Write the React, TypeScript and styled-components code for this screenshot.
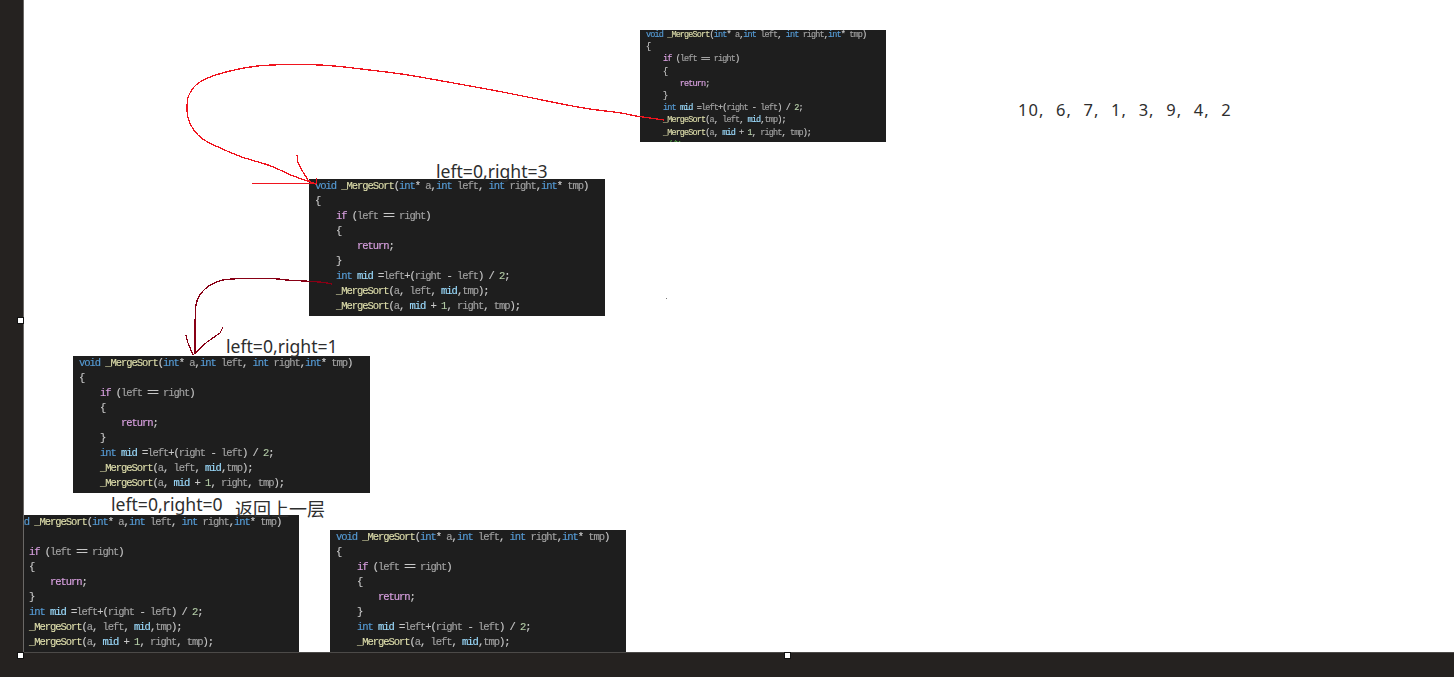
import styled, { createGlobalStyle } from "styled-components";

const GlobalStyle = createGlobalStyle`
  html, body { margin: 0; padding: 0; background: #fff; }
  #root { width: 1454px; height: 677px; overflow: hidden; }
`;

const Page = styled.div`
  position: relative;
  width: 1454px;
  height: 677px;
  display: grid;
  grid-template-columns: 24px 1fr;
  grid-template-rows: 652px 25px;
  background: #252220;
`;

const LeftRail = styled.div`
  background: #252220;
  border-right: 1px solid #6a6866;
  box-sizing: border-box;
`;

const BottomBar = styled.div`
  grid-column: 2;
  background: #252220;
  border-top: 1px solid #4c4a48;
  box-sizing: border-box;
`;

const Canvas = styled.div`
  position: relative;
  overflow: hidden;
  background: #fff;
`;

const Code = styled.div<{
  $x: number;
  $y: number;
  $w: number;
  $h: number;
  $size: number;
  $pitch: number;
  $track: number;
}>`
  position: absolute;
  left: ${(p) => p.$x}px;
  top: ${(p) => p.$y}px;
  width: ${(p) => p.$w}px;
  height: ${(p) => p.$h}px;
  overflow: hidden;
  background: #1e1e1e;
  color: #c8c8c8;
  font-family: "Liberation Mono", monospace;
  font-size: ${(p) => p.$size}px;
  line-height: ${(p) => p.$pitch}px;
  letter-spacing: ${(p) => p.$track}px;
`;

const CodeLines = styled.pre<{ $left: number; $top: number }>`
  margin: ${(p) => p.$top}px 0 0 ${(p) => p.$left}px;
  font: inherit;
  letter-spacing: inherit;
  white-space: pre;
  -webkit-text-stroke: 0.15px currentColor;
  filter: blur(0.35px);
`;

const Type = styled.span`color: #569cd6;`;
const Flow = styled.span`color: #d8a0df;`;
const Func = styled.span`color: #dcdcaa;`;
const Local = styled.span`color: #9cdcfe;`;
const Param = styled.span`color: #a0a0a0;`;
const Note = styled.span`color: #57a64a;`;
const Num = styled.span`color: #b5cea8;`;

const Label = styled.div<{ $x: number; $y: number }>`
  position: absolute;
  left: ${(p) => p.$x}px;
  top: ${(p) => p.$y}px;
  color: #2e2e2e;
  font-family: "Noto Sans", "Noto Sans CJK SC", sans-serif;
  font-size: 17.6px;
  line-height: 20px;
  white-space: nowrap;
`;

const CjkLabel = styled(Label)`
  font-family: "Noto Sans CJK SC", sans-serif;
  font-size: 18px;
`;

const Sequence = styled(Label)`
  font-size: 16.5px;
  letter-spacing: 1px;
  word-spacing: 6.4px;
`;

const Arrows = styled.svg`
  position: absolute;
  left: 0;
  top: 0;
`;

const Handle = styled.div<{ $x: number; $y: number }>`
  position: absolute;
  left: ${(p) => p.$x}px;
  top: ${(p) => p.$y}px;
  width: 5px;
  height: 5px;
  background: #fff;
  border: 1px solid #111;
`;

type Point = [number, number];

// hand-drawn stroke: smooth through the midpoints of the traced points
function smooth(points: Point[]) {
  let d = `M${points[0][0]} ${points[0][1]}`;
  for (let i = 1; i < points.length - 1; i++) {
    const [x, y] = points[i];
    const [nx, ny] = points[i + 1];
    d += ` Q${x} ${y} ${(x + nx) / 2} ${(y + ny) / 2}`;
  }
  const last = points[points.length - 1];
  return `${d} L${last[0]} ${last[1]}`;
}

const bigLoop: Point[] = [
  [664, 120], [650, 118], [635, 116], [620, 112.5], [587, 109], [537, 99], [503, 92], [470, 86], [437, 80],
  [403, 74], [370, 70], [323, 64.5], [280, 64.5], [253, 66], [220, 73], [198, 82], [190, 92], [187, 100],
  [187, 117], [193, 130], [203, 140], [220, 148], [243, 158], [270, 165], [290, 175], [310, 182], [316, 184],
];

const shortCurve: Point[] = [
  [332, 284], [325, 282], [283, 280], [277, 278.5], [227, 278.5], [213, 283], [203, 290], [196, 301], [195, 318], [195, 354],
];

function Snippet(box: {
  $x: number;
  $y: number;
  $w: number;
  $h: number;
  $size: number;
  $pitch: number;
  $track: number;
  left: number;
  top: number;
}) {
  const { left, top, ...code } = box;
  return (
    <Code {...code}>
      <CodeLines $left={left} $top={top}>
        <Type>void</Type> <Func>_MergeSort</Func>(<Type>int</Type>* <Param>a</Param>,<Type>int</Type> <Param>left</Param>, <Type>int</Type> <Param>right</Param>,<Type>int</Type>* <Param>tmp</Param>){"\n"}
        {"{\n"}
        {"    "}<Flow>if</Flow> (<Param>left</Param> == <Param>right</Param>){"\n"}
        {"    {\n"}
        {"        "}<Flow>return</Flow>;{"\n"}
        {"    }\n"}
        {"    "}<Type>int</Type> <Local>mid</Local> =<Param>left</Param>+(<Param>right</Param> - <Param>left</Param>) / <Num>2</Num>;{"\n"}
        {"    "}<Func>_MergeSort</Func>(<Param>a</Param>, <Param>left</Param>, <Local>mid</Local>,<Param>tmp</Param>);{"\n"}
        {"    "}<Func>_MergeSort</Func>(<Param>a</Param>, <Local>mid</Local> + <Num>1</Num>, <Param>right</Param>, <Param>tmp</Param>);{"\n"}
        {"     "}<Note>//Merge</Note>
      </CodeLines>
    </Code>
  );
}

const large = { $size: 10.5, $pitch: 15, $track: -1.05 };

export default function App() {
  return (
    <>
      <GlobalStyle />
      <Page>
        <LeftRail />
        <Canvas>
          <Snippet $x={616} $y={30} $w={246} $h={112} $size={8.5} $pitch={12.2} $track={-0.87} left={6} top={-1} />
          <Snippet $x={285} $y={179} $w={296} $h={137} {...large} left={6} top={0} />
          <Snippet $x={49} $y={356} $w={297} $h={137} {...large} left={6} top={0} />
          <Snippet $x={0} $y={515} $w={275} $h={137} {...large} left={-16} top={0} />
          <Snippet $x={306} $y={530} $w={296} $h={122} {...large} left={6} top={0} />

          <Label $x={412} $y={161}>left=0,right=3</Label>
          <Label $x={202} $y={336}>left=0,right=1</Label>
          <Label $x={87} $y={494}>left=0,right=0</Label>
          <CjkLabel $x={211} $y={498}>返回上一层</CjkLabel>
          <Sequence $x={994} $y={100}>10, 6, 7, 1, 3, 9, 4, 2</Sequence>

          <Arrows width="1430" height="652" viewBox="24 0 1430 652" fill="none" shapeRendering="crispEdges">
            <path d={smooth(bigLoop)} stroke="#f0141e" strokeWidth="1.3" />
            <path
              d="M316.5 178 L316.5 184 M297 155 L298 163 L303 172 L308 180 L314 184 M252 183.5 L314 183.5"
              stroke="#f0141e"
              strokeWidth="1.2"
            />
            <path d={smooth(shortCurve)} stroke="#880015" strokeWidth="1.3" />
            <path d="M186 335 L188 343 L193 355 L207 342 L220 333 L223 327" stroke="#880015" strokeWidth="1.2" />
            <rect x="666" y="298" width="1" height="1" fill="#777" />
          </Arrows>
        </Canvas>
        <BottomBar />
        <Handle $x={17} $y={317} />
        <Handle $x={17} $y={652} />
        <Handle $x={784} $y={652} />
      </Page>
    </>
  );
}
